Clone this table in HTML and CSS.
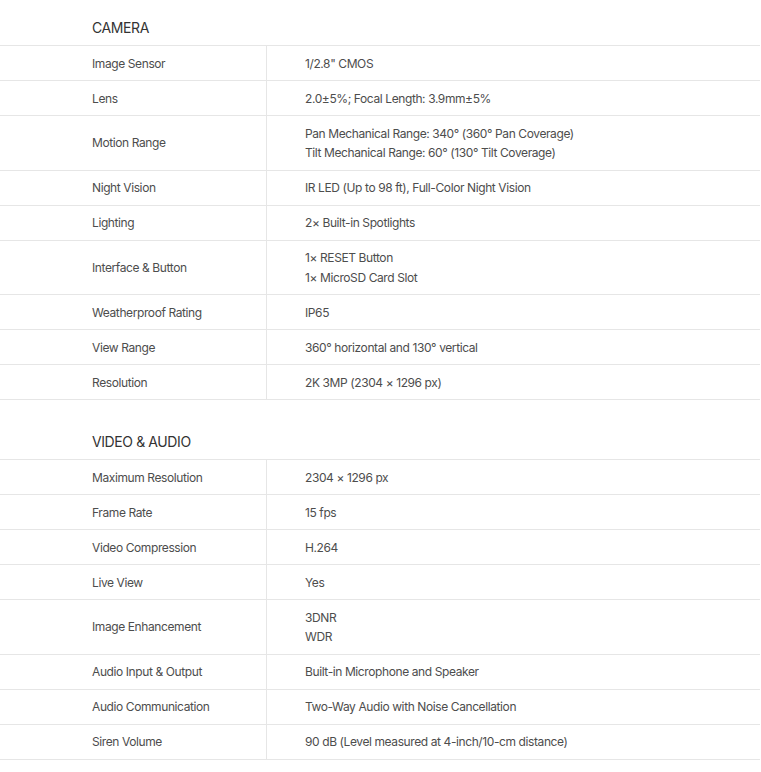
FILE: index.html
```html
<!DOCTYPE html>
<html lang="en">
<head>
<meta charset="utf-8">
<title>Specifications</title>
<link rel="stylesheet" href="styles.css">
</head>
<body>
<div class="specs">
  <section class="spec-section">
    <h2 class="section-title">CAMERA</h2>
    <div class="spec-table">
      <div class="row"><div class="label">Image Sensor</div><div class="value">1/2.8" CMOS</div></div>
      <div class="row"><div class="label">Lens</div><div class="value">2.0±5%; Focal Length: 3.9mm±5%</div></div>
      <div class="row"><div class="label">Motion Range</div><div class="value"><span>Pan Mechanical Range: 340° (360° Pan Coverage)</span><span>Tilt Mechanical Range: 60° (130° Tilt Coverage)</span></div></div>
      <div class="row"><div class="label">Night Vision</div><div class="value">IR LED (Up to 98 ft), Full-Color Night Vision</div></div>
      <div class="row"><div class="label">Lighting</div><div class="value">2× Built-in Spotlights</div></div>
      <div class="row"><div class="label">Interface &amp; Button</div><div class="value"><span>1× RESET Button</span><span>1× MicroSD Card Slot</span></div></div>
      <div class="row"><div class="label">Weatherproof Rating</div><div class="value">IP65</div></div>
      <div class="row"><div class="label">View Range</div><div class="value">360° horizontal and 130° vertical</div></div>
      <div class="row"><div class="label">Resolution</div><div class="value">2K 3MP (2304 × 1296 px)</div></div>
    </div>
  </section>
  <section class="spec-section">
    <h2 class="section-title">VIDEO &amp; AUDIO</h2>
    <div class="spec-table">
      <div class="row"><div class="label">Maximum Resolution</div><div class="value">2304 × 1296 px</div></div>
      <div class="row"><div class="label">Frame Rate</div><div class="value">15 fps</div></div>
      <div class="row"><div class="label">Video Compression</div><div class="value">H.264</div></div>
      <div class="row"><div class="label">Live View</div><div class="value">Yes</div></div>
      <div class="row"><div class="label">Image Enhancement</div><div class="value"><span>3DNR</span><span>WDR</span></div></div>
      <div class="row"><div class="label">Audio Input &amp; Output</div><div class="value">Built-in Microphone and Speaker</div></div>
      <div class="row"><div class="label">Audio Communication</div><div class="value">Two-Way Audio with Noise Cancellation</div></div>
      <div class="row"><div class="label">Siren Volume</div><div class="value">90 dB (Level measured at 4-inch/10-cm distance)</div></div>
    </div>
  </section>
</div>
</body>
</html>
```
FILE: styles.css
```css
html, body {
  margin: 0;
  padding: 0;
  background: #fff;
}
body {
  font-family: Inter, "Liberation Sans", sans-serif;
  color: #4d4d4d;
  letter-spacing: -0.4px;
}
.specs {
  width: 760px;
}
.spec-section {
  display: block;
}
.section-title {
  margin: 0;
  padding: 30px 0 5px 92px;
  font-size: 14px;
  font-weight: 400;
  line-height: 24px;
  color: #333;
}
.spec-section:first-child .section-title {
  padding-top: 16px;
}
.spec-table {
  border-top: 1px solid #e6e6e6;
}
.row {
  display: grid;
  grid-template-columns: 267px 1fr;
  border-bottom: 1px solid #e6e6e6;
}
.label {
  padding: 7.5px 0 7.5px 92px;
  font-size: 12px;
  line-height: 19px;
  display: flex;
  align-items: center;
  border-right: 1px solid #e6e6e6;
}
.value {
  padding: 7.5px 0 7.5px 38px;
  font-size: 12px;
  line-height: 19px;
  display: flex;
  flex-direction: column;
  justify-content: center;
}
.value span {
  display: block;
}
.value span + span {
  margin-top: 0.5px;
}
```
